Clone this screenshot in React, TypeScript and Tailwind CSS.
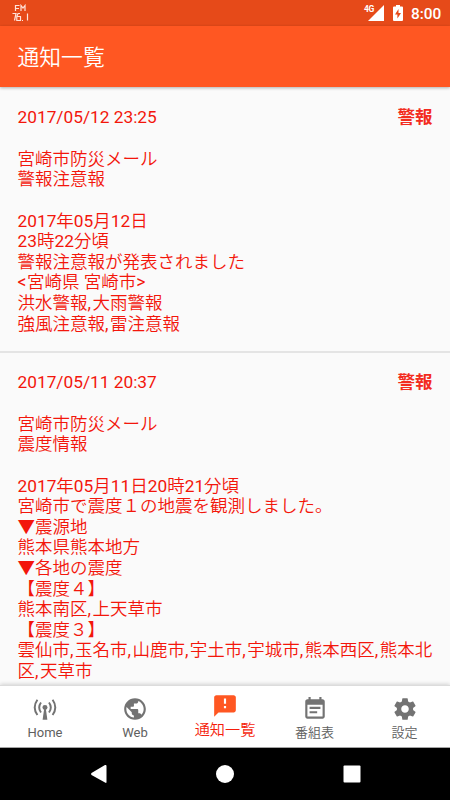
import React from 'react';

type Notice = { date: string; lines: string[] };

const notices: Notice[] = [
  {
    date: '2017/05/12 23:25',
    lines: ['', '宮崎市防災メール', '警報注意報', '', '2017年05月12日', '23時22分頃', '警報注意報が発表されました', '<宮崎県 宮崎市>', '洪水警報,大雨警報', '強風注意報,雷注意報'],
  },
  {
    date: '2017/05/11 20:37',
    lines: ['', '宮崎市防災メール', '震度情報', '', '2017年05月11日20時21分頃', '宮崎市で震度１の地震を観測しました。', '▼震源地', '熊本県熊本地方', '▼各地の震度', '【震度４】', '熊本南区,上天草市', '【震度３】', '雲仙市,玉名市,山鹿市,宇土市,宇城市,熊本西区,熊本北', '区,天草市'],
  },
];

function StatusBar() {
  return (
    <div className="flex h-[26px] shrink-0 items-start bg-[#e64a19] text-white">
      <svg className="ml-3 mt-[4px]" width="18" height="18" viewBox="0 0 18 18" fill="none" stroke="#ffe3da" strokeWidth="1.2">
        <path d="M3.500 7V1.500H7.500M3.500 4.500H7M9 7V1.500L11 4L13 1.500V7" />
        <path d="M0.500 9.500H4L2.500 16.500M8 9.500H6L4.800 12.500V16.500H8.500V12.500H5M10 16.500H11M15.500 9.500V16.500" />
      </svg>
      <div className="ml-auto flex items-start pr-[8px]">
        <span className="mt-[5px] w-[10px] text-[8.5px] leading-[8px] font-bold tracking-tighter">4G</span>
        <svg className="-ml-[6px] mt-[5px]" width="16" height="16" viewBox="0 0 16 16" fill="#fff">
          <path d="M16 0V16H0Z" />
        </svg>
        <svg className="ml-[9px] mt-[5px]" width="10" height="16" viewBox="0 0 10 16">
          <path d="M3 0H7V1.500H9Q10 1.500 10 2.500V15Q10 16 9 16H1Q0 16 0 15V2.500Q0 1.500 1 1.500H3Z" fill="#fff" />
          <path d="M5.500 4L2 9.500H4.400V13.500L8 8H5.500Z" fill="#e64a19" />
        </svg>
        <span className="ml-[8px] mt-[5px] w-[31px] text-[15.4px] leading-[18px] font-medium whitespace-nowrap">8:00</span>
      </div>
    </div>
  );
}

// Latin runs are set in the regular weight; Japanese runs inherit the lighter one.
function NoticeLine({ text }: { text: string }) {
  return (
    <div className="h-[20.6px] whitespace-pre">
      {text.split(/([,<>]|\d+)/).map((part, i) => {
        if (i % 2 === 0) return part;
        if (part === ',') return <span key={i} className="font-normal tracking-[1.5px]">{part}</span>;
        if (part === '<' || part === '>') return <span key={i} className="font-normal tracking-[0.5px]">{part}</span>;
        return <span key={i} className="text-[17.3px] font-normal">{part}</span>;
      })}
    </div>
  );
}

function NoticeItem({ notice }: { notice: Notice }) {
  return (
    <article className="border-b-2 border-[#e4e4e4] px-[17.5px] pt-[19.2px] pb-[17.2px] text-[17.5px] leading-[20.6px] font-[350] text-[#f3160b]">
      <div className="flex h-[21px] justify-between">
        <span className="text-[17.3px] font-normal">{notice.date}</span>
        <span className="font-bold text-[#f32c20]">警報</span>
      </div>
      <div className="-mb-[0.4px] pt-[0.1px]">
        {notice.lines.map((line, i) => <NoticeLine key={i} text={line} />)}
      </div>
    </article>
  );
}

const tabs = [
  {
    label: 'Home',
    icon: (
      <g>
        <g fill="none" stroke="#737373" strokeWidth="1.8">
          <path d="M5 3.500Q0 10.500 5 17.500M19 3.500Q24 10.500 19 17.500M8.300 6Q5 10.500 8.300 15.200M15.700 6Q19 10.500 15.700 15.200" />
        </g>
        <circle cx="12" cy="10.500" r="2.300" />
        <path d="M11.200 12H12.800L14.200 22H9.800Z" />
      </g>
    ),
  },
  {
    label: 'Web',
    icon: <path d="M12 2C6.480 2 2 6.480 2 12s4.480 10 10 10 10-4.480 10-10S17.520 2 12 2zm-1 17.930c-3.950-.49-7-3.850-7-7.930 0-.62.08-1.210.21-1.790L9 15v1c0 1.100.9 2 2 2v1.930zm6.900-2.540c-.26-.81-1-1.390-1.900-1.390h-1v-3c0-.55-.45-1-1-1H8v-2h2c.55 0 1-.45 1-1V7h2c1.100 0 2-.9 2-2v-.41c2.930 1.190 5 4.060 5 7.410 0 2.080-.8 3.970-2.100 5.390z" />,
  },
  {
    label: '通知一覧',
    icon: <path d="M20 2H4c-1.100 0-2 .9-2 2v18l4-4h14c1.100 0 2-.9 2-2V4c0-1.100-.9-2-2-2zm-7 12h-2v-2h2v2zm0-4h-2V5h2v5z" />,
  },
  {
    label: '番組表',
    icon: <path d="M17 10H7v2h10v-2zm2-7h-1V1h-2v2H8V1H6v2H5c-1.110 0-1.990.9-1.990 2L3 19c0 1.100.89 2 2 2h14c1.100 0 2-.9 2-2V5c0-1.100-.9-2-2-2zm0 16H5V8h14v11zm-5-5H7v2h7v-2z" />,
  },
  {
    label: '設定',
    icon: <path d="M19.430 12.980c.04-.32.07-.64.07-.98s-.03-.66-.07-.98l2.110-1.650c.19-.15.24-.42.12-.64l-2-3.460c-.12-.22-.39-.3-.61-.22l-2.490 1c-.52-.4-1.080-.73-1.690-.98l-.38-2.650C14.460 2.180 14.250 2 14 2h-4c-.25 0-.46.18-.49.42l-.38 2.650c-.61.25-1.170.59-1.690.98l-2.490-1c-.23-.09-.49 0-.61.22l-2 3.460c-.13.22-.07.49.12.64l2.110 1.650c-.04.32-.07.65-.07.98s.03.66.07.98l-2.110 1.650c-.19.15-.24.42-.12.64l2 3.460c.12.22.39.3.61.22l2.490-1c.52.4 1.080.73 1.690.98l.38 2.650c.03.24.24.42.49.42h4c.25 0 .46-.18.49-.42l.38-2.650c.61-.25 1.170-.59 1.690-.98l2.490 1c.23.09.49 0 .61-.22l2-3.460c.12-.22.07-.49-.12-.64l-2.110-1.650zM12 15.500c-1.930 0-3.500-1.570-3.500-3.500s1.570-3.500 3.500-3.500 3.500 1.570 3.500 3.500-1.570 3.500-3.500 3.500z" />,
  },
];

function BottomTabs() {
  return (
    <nav className="z-10 grid h-[62px] shrink-0 grid-cols-5 border-t border-[#dcdcdc] bg-white shadow-[0_-1px_4px_rgba(0,0,0,0.16)]">
      {tabs.map((tab, i) => (
        <div key={tab.label} className={i === 2 ? 'flex flex-col items-center pt-[7px] text-[#f51d0b]' : i < 2 ? 'flex flex-col items-center pt-[10px] text-[#606060]' : 'flex flex-col items-center pt-[10px] pr-[1px] font-[350] text-[#606060]'}>
          <svg width="26" height="26" viewBox="0 0 24 24" className={i === 2 ? 'fill-[#ff5722]' : 'fill-[#737373]'}>{tab.icon}</svg>
          <span className={i === 2 ? 'mt-[2px] text-[15.2px] leading-[18px] font-[350]' : 'mt-[3px] text-[13px] leading-[16px]'}>{tab.label}</span>
        </div>
      ))}
    </nav>
  );
}

export default function App() {
  return (
    <div lang="ja" className="flex h-[800px] w-[450px] flex-col overflow-hidden bg-[#fafafa] font-[Roboto,'Noto_Sans_CJK_JP',sans-serif]">
      <StatusBar />
      <header className="z-10 flex h-[61px] shrink-0 items-center bg-[#ff5722] px-[17.5px] pt-[2px] text-[21.8px] leading-[28px] font-[350] text-white shadow-[0_1px_3px_rgba(0,0,0,0.3)]">通知一覧</header>
      <main className="min-h-0 flex-1 overflow-hidden pt-[1px]">
        {notices.map((n) => <NoticeItem key={n.date} notice={n} />)}
      </main>
      <BottomTabs />
      <div className="grid h-[53px] shrink-0 grid-cols-[99px_26px_100px_26px_101px_26px_1fr] items-center border-t border-[#aaa] bg-black">
        <span />
        <svg className="-ml-[13px]" width="26" height="26" viewBox="0 0 26 26" fill="#fff"><path d="M19 4Q20.500 3.500 20.500 5V21Q20.500 22.500 19 21.500L5.500 14Q4.500 13 5.500 12Z" /></svg>
        <span />
        <svg className="-ml-[13px]" width="26" height="26" viewBox="0 0 26 26" fill="#fff"><circle cx="13" cy="13" r="9" /></svg>
        <span />
        <svg className="-ml-[13px]" width="26" height="26" viewBox="0 0 26 26" fill="#fff"><rect x="4.500" y="4.500" width="17" height="17" rx="1" /></svg>
      </div>
    </div>
  );
}
